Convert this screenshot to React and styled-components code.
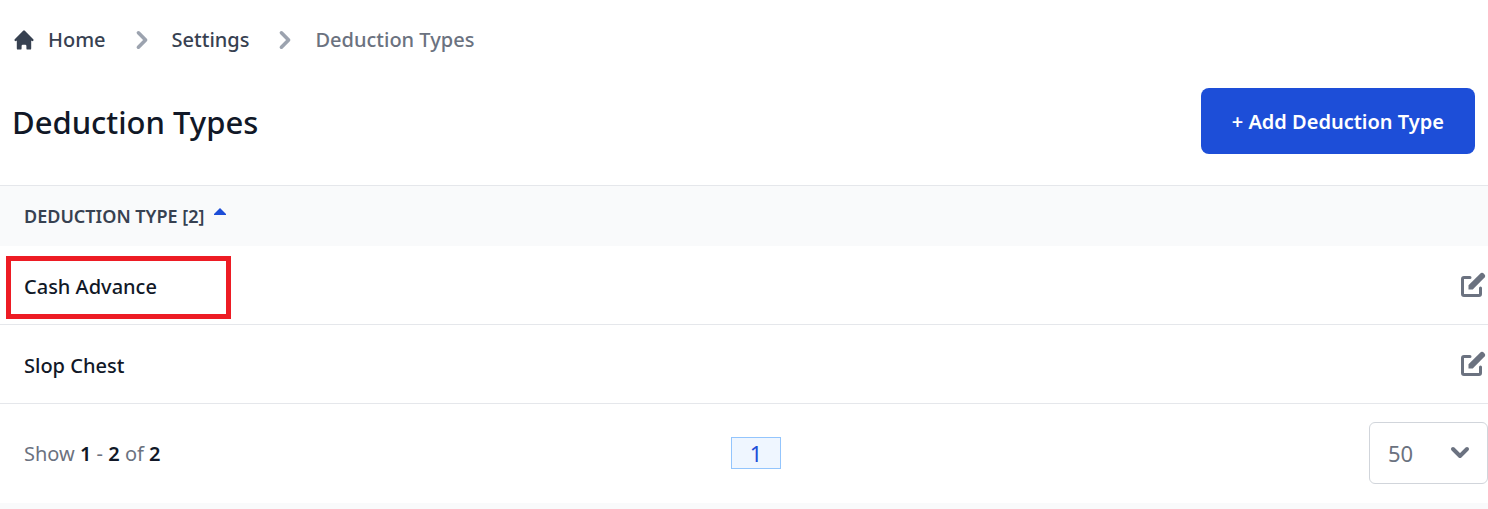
import React, { useState } from "react";
import styled, { createGlobalStyle } from "styled-components";
import { HiHome, HiChevronRight, HiPencilAlt } from "react-icons/hi";

const GlobalStyle = createGlobalStyle`
* {
    box-sizing: border-box;
}
body {
    margin: 0;
    background-color: #f9fafb;
    color: #111827;
    font-family: "Noto Sans", "Open Sans", sans-serif;
    font-size: 20px;
    line-height: 30px;
}
button, select {
    font: inherit;
}
`

const StyledPage = styled.main`
background-color: #ffffff;
`
const StyledTop = styled.header`
padding: 22px 13px 31px 12px;
border-bottom: 1px solid #e5e7eb;
`
const StyledBreadcrumb = styled.ol`
display: flex;
align-items: center;
gap: 18px;
margin: 0 0 30px;
padding: 0;
list-style: none;
font-weight: 500;
color: #6b7280;
`
const StyledCrumb = styled.li`
display: flex;
align-items: center;
gap: 12px;
> svg {
    color: #9ca3af;
}
`
const StyledCrumbLink = styled.a`
display: flex;
align-items: center;
gap: 12px;
color: #374151;
text-decoration: none;
&:hover {
    color: #1d4ed8;
}
`
const StyledTitleBar = styled.div`
display: flex;
align-items: center;
justify-content: space-between;
`
const StyledTitle = styled.h1`
margin: 0;
padding-top: 2px;
font-weight: 500;
font-size: 31px;
line-height: 40px;
`
const StyledAddButton = styled.button`
padding: 19px 31px 17px;
border: 0;
border-radius: 8px;
background-color: #1d4ed8;
color: #ffffff;
font-weight: 600;
cursor: pointer;
&:hover {
    background-color: #1e40af;
}
`

const StyledTable = styled.table`
width: 100%;
border-collapse: separate;
border-spacing: 0;
text-align: left;
`
const StyledHeadCell = styled.th`
height: 60px;
padding: 0 24px;
background-color: #f9fafb;
`
const StyledSortButton = styled.button`
display: flex;
gap: 10px;
padding: 0;
border: 0;
background: none;
color: #374151;
font-weight: 600;
font-size: 18px;
text-transform: uppercase;
cursor: pointer;
svg {
    margin-top: 7px;
}
`
const StyledCell = styled.td`
position: relative;
height: 79px;
padding: ${({ $action }) => ($action ? "0" : "4px 24px 0")};
width: ${({ $action }) => ($action ? "30px" : "auto")};
border-bottom: 1px solid #e5e7eb;
font-weight: 500;
`
const StyledHighlight = styled.span`
position: absolute;
top: 10px;
left: 6px;
width: 225px;
height: 63px;
border: 5px solid #ed1c24;
pointer-events: none;
`
const StyledEditButton = styled.button`
display: block;
padding: 0;
border: 0;
background: none;
color: #6b7280;
cursor: pointer;
svg {
    display: block;
}
`

const StyledFooter = styled.nav`
display: grid;
grid-template-columns: 1fr auto 1fr;
align-items: center;
padding: 18px 0 19px 24px;
`
const StyledSummary = styled.span`
padding-top: 2px;
color: #6b7280;
strong {
    color: #111827;
    font-weight: 600;
}
`
const StyledPageButton = styled.button`
width: 50px;
height: 32px;
padding: 0;
border: 1px solid #93c5fd;
background-color: #eff6ff;
color: #1d4ed8;
font-size: 22px;
line-height: 30px;
`
const StyledSelectWrap = styled.label`
position: relative;
justify-self: end;
svg {
    position: absolute;
    top: 24px;
    right: 18px;
    pointer-events: none;
}
`
const StyledSelect = styled.select`
display: block;
width: 119px;
height: 62px;
padding: 0 18px;
border: 1px solid #d1d5db;
border-radius: 6px;
appearance: none;
background-color: #ffffff;
color: #6b7280;
font-size: 22px;
`

const deductionTypes = [
    { id: 1, name: "Cash Advance", highlighted: true },
    { id: 2, name: "Slop Chest", highlighted: false },
];

const Breadcrumb = () => (
    <nav aria-label="Breadcrumb">
        <StyledBreadcrumb>
            <StyledCrumb>
                <StyledCrumbLink href="#home"><HiHome size={24} />Home</StyledCrumbLink>
            </StyledCrumb>
            <StyledCrumb>
                <HiChevronRight size={36} />
                <StyledCrumbLink href="#settings">Settings</StyledCrumbLink>
            </StyledCrumb>
            <StyledCrumb aria-current="page">
                <HiChevronRight size={36} />
                Deduction Types
            </StyledCrumb>
        </StyledBreadcrumb>
    </nav>
);

const App = () => {
    const [ascending, setAscending] = useState(true);
    const [perPage, setPerPage] = useState("50");

    const rows = ascending ? deductionTypes : [...deductionTypes].reverse();

    const renderRows = () => {
        return rows.map((type) => (
            <tr key={type.id}>
                <StyledCell>
                    {type.name}
                    {type.highlighted && <StyledHighlight />}
                </StyledCell>
                <StyledCell $action>
                    <StyledEditButton aria-label={`Edit ${type.name}`}>
                        <HiPencilAlt size={30} />
                    </StyledEditButton>
                </StyledCell>
            </tr>
        ));
    };

    return (
        <>
            <GlobalStyle />
            <StyledPage>
                <StyledTop>
                    <Breadcrumb />
                    <StyledTitleBar>
                        <StyledTitle>Deduction Types</StyledTitle>
                        <StyledAddButton>+ Add Deduction Type</StyledAddButton>
                    </StyledTitleBar>
                </StyledTop>
                <StyledTable>
                    <thead>
                        <tr>
                            <StyledHeadCell colSpan={2}>
                                <StyledSortButton onClick={() => setAscending(!ascending)}>
                                    Deduction type [{deductionTypes.length}]
                                    <svg width="12" height="7" viewBox="0 0 12 7" aria-hidden="true">
                                        <path d="M6 0L12 6V7H0V6Z" fill="#1d4ed8" />
                                    </svg>
                                </StyledSortButton>
                            </StyledHeadCell>
                        </tr>
                    </thead>
                    <tbody>{renderRows()}</tbody>
                </StyledTable>
                <StyledFooter aria-label="Pagination">
                    <StyledSummary>
                        Show <strong>1</strong> - <strong>2</strong> of <strong>2</strong>
                    </StyledSummary>
                    <StyledPageButton aria-current="page">1</StyledPageButton>
                    <StyledSelectWrap>
                        <StyledSelect
                            aria-label="Rows per page"
                            value={perPage}
                            onChange={(e) => setPerPage(e.target.value)}
                        >
                            <option>10</option>
                            <option>50</option>
                            <option>100</option>
                        </StyledSelect>
                        <svg width="20" height="14" viewBox="0 0 20 14" fill="none" aria-hidden="true">
                            <path d="M3 3L10 10L17 3" stroke="#6b7280" strokeWidth="4" strokeLinecap="round" strokeLinejoin="round" />
                        </svg>
                    </StyledSelectWrap>
                </StyledFooter>
            </StyledPage>
        </>
    );
};

export default App;
